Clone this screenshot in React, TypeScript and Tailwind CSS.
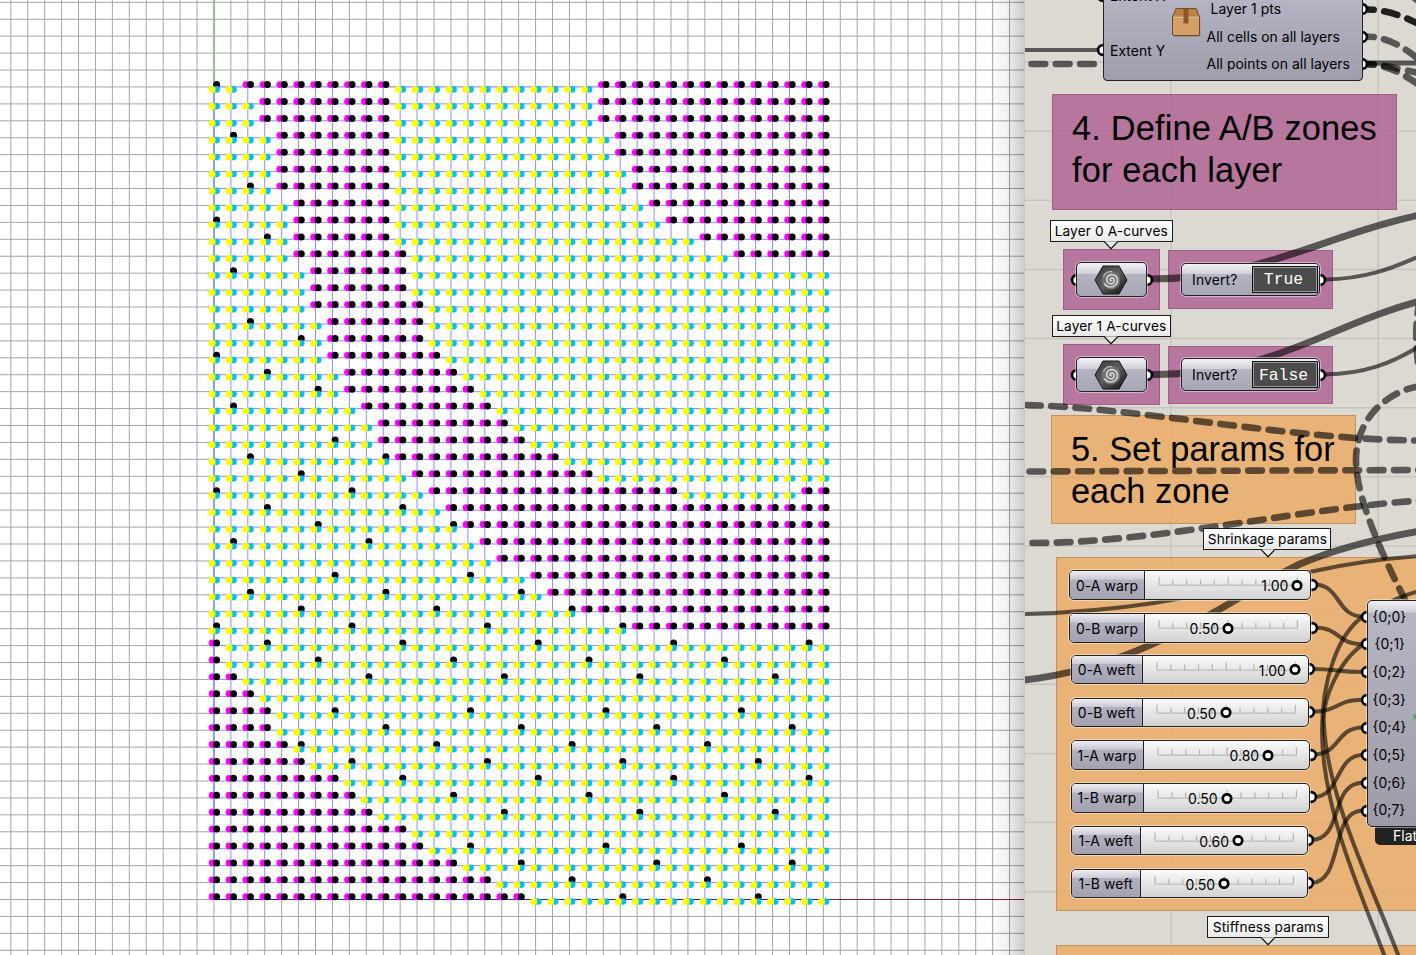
import React from "react";

/* ---------- Viewport: grid, mesh and stitch points ---------- */

const OX = 213.95;
const OY = 899.5;
const PITCH = 16.928;
const COLS = 37;
const ROWS = 49;

type Span = [number, number];

// Columns that belong to zone A, listed for every row from the top.
const zoneA: Span[][] = [
  [[2, 10], [23, 36]],
  [[3, 10], [23, 36]],
  [[3, 10], [23, 36]],
  [[4, 10], [24, 36]],
  [[4, 10], [24, 36]],
  [[4, 10], [25, 36]],
  [[4, 10], [25, 36]],
  [[5, 10], [26, 36]],
  [[5, 10], [27, 36]],
  [[5, 10], [29, 36]],
  [[5, 11], [31, 36]],
  [[6, 11]],
  [[6, 11]],
  [[6, 12]],
  [[7, 12]],
  [[7, 12]],
  [[7, 13]],
  [[8, 14]],
  [[8, 15]],
  [[9, 16]],
  [[10, 17]],
  [[10, 18]],
  [[11, 20]],
  [[12, 22]],
  [[13, 27], [35, 36]],
  [[14, 36]],
  [[15, 36]],
  [[16, 36]],
  [[17, 36]],
  [[19, 36]],
  [[20, 36]],
  [[22, 36]],
  [[25, 36]],
  [[0, 0]],
  [[0, 0]],
  [[0, 1]],
  [[0, 2]],
  [[0, 3]],
  [[0, 3]],
  [[0, 4]],
  [[0, 5]],
  [[0, 7]],
  [[0, 8]],
  [[0, 9]],
  [[0, 11]],
  [[0, 12]],
  [[0, 14]],
  [[0, 16]],
  [[0, 18]],
];

const range = (n: number) => Array.from({ length: n }, (_, i) => i);

function Stitches() {
  const out: React.ReactNode[] = [];
  zoneA.forEach((spans, r) => {
    const y = 84.6 + r * 16.92;
    range(COLS).forEach((c) => {
      const x = 212.1 + c * PITCH;
      const key = r + "-" + c;
      if (spans.some(([a, b]) => c >= a && c <= b)) {
        out.push(
          <g key={key}>
            <circle cx={x} cy={y} r={3.4} fill="#ff00ff" />
            <circle cx={x + 4.5} cy={y} r={3.5} fill="#000" />
          </g>
        );
        return;
      }
      const tied = r % 8 !== 4 && (3 * c) % 8 === r % 8 && (r > 31 || c < spans[0][0]);
      out.push(
        <g key={key}>
          {tied && <circle cx={x + 4.5} cy={y} r={3.5} fill="#000" />}
          <circle cx={x + 4.5} cy={y + 4.8} r={3.3} fill="#00bfff" />
          <circle cx={x} cy={y + 4.8} r={3.5} fill="#ffff00" />
        </g>
      );
    });
  });
  return <>{out}</>;
}

function Viewport() {
  const top = OY - 48 * PITCH;
  const right = OX + 36 * PITCH;
  return (
    <section className="relative h-full w-[1024px] shrink-0 overflow-hidden bg-white">
      <svg width="1024" height="955" viewBox="0 0 1024 955" className="block">
        <g stroke="#a3a4ad" strokeWidth="1">
          {range(62).map((i) => {
            const x = OX + (i - 12) * PITCH;
            return <line key={"v" + i} x1={x} x2={x} y1={0} y2={955} />;
          })}
          {range(58).map((i) => {
            const y = OY + (i - 54) * PITCH;
            return <line key={"h" + i} x1={0} x2={1024} y1={y} y2={y} />;
          })}
        </g>
        <rect x={OX} y={top} width={right - OX} height={OY - top} fill="#fff" />
        <g stroke="#8c8cff" strokeWidth="1">
          {range(COLS).map((i) => (
            <line key={"v" + i} x1={OX + i * PITCH} x2={OX + i * PITCH} y1={top} y2={OY} />
          ))}
          {range(ROWS).map((i) => (
            <line key={"h" + i} x1={OX} x2={right} y1={OY - i * PITCH} y2={OY - i * PITCH} />
          ))}
        </g>
        <line x1={OX} x2={OX} y1={0} y2={top} stroke="#86c486" strokeWidth="1.8" />
        <line x1={OX} x2={OX} y1={top} y2={OY} stroke="#7fa0dc" strokeWidth="1.8" />
        <line x1={OX} x2={right} y1={OY} y2={OY} stroke="#2a1fae" strokeWidth="1" />
        <line x1={right} x2={1024} y1={OY} y2={OY} stroke="#7c2530" strokeWidth="1" />
        <Stitches />
      </svg>
      <div className="absolute inset-y-0 right-0 w-9 bg-gradient-to-r from-black/0 via-black/5 to-black/20" />
    </section>
  );
}

/* ---------- Node canvas ---------- */

const PX = 1024;

const capsule =
  "rounded-[5px] border border-[#222] bg-[linear-gradient(#f3f3f6_0%,#cfcfda_33%,#b4b4c2_34%,#a6a6b4_100%)] shadow-[0_0_0_1px_rgba(255,255,255,0.45)]";

function Place({ x, y, w, h, className = "", children }: {
  x: number; y: number; w?: number; h?: number; className?: string; children?: React.ReactNode;
}) {
  return (
    <div className={"absolute " + className} style={{ left: x - PX, top: y, width: w, height: h }}>
      {children}
    </div>
  );
}

function Group({ x, y, w, h, tone, children }: {
  x: number; y: number; w: number; h: number; tone: "pink" | "orange"; children?: React.ReactNode;
}) {
  const cls =
    tone === "pink"
      ? "border border-[#8f4f7c]/60 bg-[#b36a98]/90"
      : "border border-[#b98c5c]/80 bg-[#eaad6c]/90";
  return <Place x={x} y={y} w={w} h={h} className={cls}>{children}</Place>;
}

function Callout({ x, y, w, tip, text }: { x: number; y: number; w: number; tip: number; text: string }) {
  return (
    <Place x={x} y={y} w={w} h={22}>
      <div className="flex h-full items-center justify-center whitespace-nowrap border-[1.5px] border-[#1c1c1c] bg-gradient-to-b from-white to-[#e9e9e9] pt-px text-[13.7px] tracking-[0.12px]">
        {text}
      </div>
      <svg className="absolute top-[20px]" style={{ left: tip - x - 8 }} width="16" height="10" viewBox="0 0 16 10">
        <path d="M1 1.400 L8 8.800 L15 1.400" fill="#ebebeb" stroke="#1c1c1c" strokeWidth="1.3" />
        <path d="M2 0.600 H14" stroke="#ebebeb" strokeWidth="1.6" />
      </svg>
    </Place>
  );
}

function Grip({ x, y }: { x: number; y: number }) {
  return (
    <svg className="absolute" style={{ left: x - PX - 7, top: y - 7 }} width="14" height="14" viewBox="0 0 14 14">
      <circle cx="7" cy="7" r="4.900" fill="#fff" stroke="#000" strokeWidth="2.600" />
    </svg>
  );
}

function CurveParam({ y }: { y: number }) {
  return (
    <>
      <Grip x={1076.5} y={y} />
      <Grip x={1146.5} y={y} />
      <Place x={1076} y={y - 17.5} w={70.5} h={35} className={"flex items-center justify-center " + capsule}>
        <svg width="34" height="30" viewBox="0 0 34 30">
          <defs>
            <linearGradient id="hex" x1="0" y1="0" x2="1" y2="1">
              <stop offset="0" stopColor="#3c3c3c" />
              <stop offset="0.5" stopColor="#5c5c5c" />
              <stop offset="1" stopColor="#0e0e0e" />
            </linearGradient>
          </defs>
          <path d="M9 1 H25 L33 15 L25 29 H9 L1 15 Z" fill="url(#hex)" stroke="#161616" strokeWidth="1" />
          <circle cx="17" cy="15" r="9.5" fill="#6f6f6f" />
          <path
            d="M17.5 15.5 C15.8 16.3 15.2 13.6 17.2 13 C20 12.3 21.3 15.6 19.6 17.6 C17.4 20 13 18.6 12.7 15 C12.4 10.8 16.6 8.6 20 10 C24.2 11.8 24.6 17.2 21.6 20 C18.4 23 13 22.6 10.6 19"
            fill="none" stroke="#d2d2d2" strokeWidth="1.7" strokeLinecap="round"
          />
          <path d="M9.4 12 C10.6 8.4 14 6.2 18 6.6" fill="none" stroke="#b4b4b4" strokeWidth="1.2" />
        </svg>
      </Place>
    </>
  );
}

function InvertToggle({ y, value }: { y: number; value: string }) {
  return (
    <>
      <Grip x={1319.5} y={y} />
      <Place x={1181} y={y - 16.500} w={138.500} h={33} className={"flex items-center pl-[10px] " + capsule}>
        <span className="w-[59.5px] pt-[2px] text-[13.9px] tracking-[0.15px]">Invert?</span>
        <span className="flex h-[27px] w-[66px] items-center justify-center border-[1.5px] border-[#161616] bg-[#4c4c4c] pr-[2px] pt-[2px] font-['Liberation_Mono',monospace] text-[16.4px] text-white shadow-[inset_0_0_0_1px_#9a9a9a]">
          {value}
        </span>
      </Place>
    </>
  );
}

interface SliderData {
  name: string; value: number; x: number; y: number; split: number; right: number; scale: number;
}

const sliders: SliderData[] = [
  { name: "0-A warp", value: 1, x: 1069, y: 585, split: 1144.5, right: 1311, scale: 1158.4 },
  { name: "0-B warp", value: 0.5, x: 1069, y: 628, split: 1144.5, right: 1311, scale: 1158.4 },
  { name: "0-A weft", value: 1, x: 1070.5, y: 669.5, split: 1142, right: 1308.5, scale: 1155.4 },
  { name: "0-B weft", value: 0.5, x: 1070.5, y: 712.3, split: 1142, right: 1308.5, scale: 1155.4 },
  { name: "1-A warp", value: 0.8, x: 1070.5, y: 755, split: 1143, right: 1310, scale: 1156.7 },
  { name: "1-B warp", value: 0.5, x: 1070.5, y: 797.8, split: 1143, right: 1310, scale: 1156.7 },
  { name: "1-A weft", value: 0.6, x: 1070.5, y: 840.6, split: 1140.5, right: 1307.5, scale: 1154 },
  { name: "1-B weft", value: 0.5, x: 1070.5, y: 883.6, split: 1140.5, right: 1307.5, scale: 1154 },
];

function Slider({ s }: { s: SliderData }) {
  return (
    <>
      <Grip x={s.right + 0.5} y={s.y - 0.5} />
      <Place
        x={s.x} y={s.y - 14.8} w={s.right - s.x} h={29.6}
        className="flex overflow-hidden rounded-[5px] border border-[#222] bg-[linear-gradient(#fafafa,#d2d2d2)] shadow-[0_0_0_1px_rgba(255,255,255,0.45)]"
      >
        <div
          className="flex h-full shrink-0 items-center justify-center whitespace-nowrap border-r-[1.5px] border-[#222] bg-[linear-gradient(#ededf1_0%,#c9c9d5_30%,#b0b0be_31%,#a2a2b0_100%)] pt-[2px] text-[13.9px] tracking-[0.1px]"
          style={{ width: s.split - s.x - 0.5 }}
        >
          {s.name}
        </div>
        <div className="relative h-full flex-1 pl-[10px] pt-[4px]">
          <svg width="150" height="20" viewBox="0 0 150 20">
            <path d="M4 10.3 H142.4" stroke="#c3c3c3" strokeWidth="1.4" />
            {range(11).map((i) => (
              <line key={i} x1={4 + i * 13.84} x2={4 + i * 13.84} y1={i % 5 ? 4.5 : 2.3} y2={10} stroke="#b4b4b4" strokeWidth="1.2" />
            ))}
          </svg>
          <div
            className="absolute top-[4px] flex w-[60px] items-center justify-end gap-[3px] text-[14px] leading-[20px]"
            style={{ left: 14 + 138.4 * s.value - 54 }}
          >
            <span className="pt-px">{s.value.toFixed(2)}</span>
            <svg width="12" height="12" viewBox="0 0 12 12" className="shrink-0">
              <circle cx="6" cy="5.500" r="4.200" fill="#fff" stroke="#000" strokeWidth="2.700" />
            </svg>
          </div>
        </div>
      </Place>
    </>
  );
}

const inputs = [616.5, 644.3, 672, 699.7, 727.5, 755, 782.7, 810.5];

function Wires() {
  return (
    <svg className="absolute inset-0" width="392" height="955" viewBox="1024 0 392 955" fill="none" stroke="#000" strokeOpacity="0.6">
      <g strokeWidth="4">
        <path d="M1024 50 H1100" />
        <path d="M1325 279.5 C1365 279 1390 269 1420 256" />
        <path d="M1325 374.5 C1365 374 1392 363 1420 346" />
        <path d="M1024 614 C1150 611 1220 590 1312 571.5 C1350 563 1380 559 1420 556" />
        <path d="M1392 601 C1400 597 1408 594 1420 591" />
        <path d="M1363 616.5 C1338 634 1322 680 1322 730 C1322 810 1360 890 1388 965" />
        <path d="M1363 644.5 C1340 660 1321 700 1324 725 C1328 800 1370 880 1402 965" />
        {sliders.map((s, i) => {
          const a = s.right + 3;
          const k = i < 2 ? 27 : i > 5 ? 34 : 28;
          return (
            <path key={s.name} d={`M${a} ${s.y - 0.5} C${a + k} ${s.y - 0.5} ${1363 - k} ${inputs[i]} 1363 ${inputs[i]}`} />
          );
        })}
      </g>
      <g strokeWidth="7">
        <path d="M1150 279 C1270 279 1330 229 1450 209" />
        <path d="M1150 374.5 C1285 374.5 1325 322 1440 296" />
        <path d="M1024 680 C1150 666 1235 595 1300 564 C1340 547 1380 538 1420 531" />
        <path d="M1364 63 H1420" strokeWidth="5" />
      </g>
      <g strokeWidth="6.6" strokeLinecap="round" strokeDasharray="13.7 10.6">
        <path d="M1031.5 64 H1104" />
        <path d="M1020 405 C1130 406 1290 440 1420 440.5" strokeDashoffset="-7" />
        <path d="M1029.5 471.5 L1420 470" />
        <path d="M1032.5 543 C1160 543 1310 506 1430 500" />
        <path d="M1420 386 C1385 392 1356 420 1356 460 C1356 500 1385 560 1406 602" />
        <path d="M1420 300 C1415 320 1415 350 1420 375" />
        <path d="M1364 9.5 C1385 9 1405 16 1426 28" strokeOpacity="0.86" strokeDashoffset="4" />
        <path d="M1364 36.5 C1385 36 1405 46 1426 66" strokeDashoffset="4" />
        <path d="M1364 64 C1385 64 1400 70 1426 74" strokeDashoffset="4" />
        <path d="M1364 64 C1385 64 1402 72 1426 90" strokeDashoffset="4" />
        <path d="M1413 -3 L1420 2" />
      </g>
    </svg>
  );
}

function ClusterNode() {
  return (
    <>
      <Grip x={1103} y={-4} />
      <Grip x={1102.5} y={50} />
      <Grip x={1362} y={9} />
      <Grip x={1362} y={36.5} />
      <Grip x={1362} y={64} />
      <Place
        x={1103} y={-20} w={259.5} h={101}
        className="flex items-start whitespace-nowrap rounded-[4px] border border-[#222] bg-gradient-to-b from-[#b9b9c7] to-[#9d9dab] text-[13.9px] leading-[20px] tracking-[0.05px]"
      >
        <div className="flex w-[66px] flex-col gap-[34.7px] pl-[6px] pt-[5px]">
          <span>Extent X</span>
          <span>Extent Y</span>
        </div>
        <svg width="32" height="32" viewBox="0 0 32 32" className="mt-[25px] shrink-0">
          <path d="M2.5 12 L5.5 2.5 H26.5 L29.5 12 V28 Q29.5 29.5 28 29.5 H4 Q2.5 29.5 2.5 28 Z" fill="#5a4126" opacity="0.5" transform="translate(0.7 1)" />
          <path d="M2.5 11 L6 2.5 H26 L29.5 11 Z" fill="#b98347" stroke="#7a4d20" strokeWidth="1" />
          <path d="M2.5 10.5 H29.5 V28 Q29.5 29.5 28 29.5 H4 Q2.5 29.5 2.5 28 Z" fill="#d3a067" stroke="#6e4a24" strokeWidth="1" />
          <path d="M3.2 11 H29" stroke="#f1cf9d" strokeWidth="1.2" />
          <path d="M13.5 3 H18.5 V18 L17.3 17 L16 18 L14.7 17 L13.5 18 Z" fill="#8e5727" />
        </svg>
        <div className="flex flex-col pl-[4.5px] pt-[15.3px] leading-[27.4px]">
          <span className="pl-[4px]">Layer 1 pts</span>
          <span>All cells on all layers</span>
          <span>All points on all layers</span>
        </div>
      </Place>
    </>
  );
}

function MergeNode() {
  return (
    <>
      {inputs.map((y) => <Grip key={y} x={1367} y={y} />)}
      <Place x={1375} y={824} w={60} h={21} className="rounded-[5px] bg-[#222] pl-[18px] pt-[3px] text-[14px] leading-[18px] text-white">Flatten</Place>
      <Place
        x={1366.5} y={599.5} w={80} h={227}
        className="flex flex-col rounded-[5px] border border-[#222] bg-[linear-gradient(#f0f0f3_0px,#cfcfd9_11px,#b6b6c3_12px,#9c9ca9_100%)] pl-[5px] pt-[3px] text-[13.9px] leading-[27.7px] shadow-[0_0_0_1px_rgba(255,255,255,0.45)]"
      >
        {inputs.map((y, i) => (
          <span key={y} className={i === 1 ? "pl-[2px]" : ""}>{`{0;${i}}`}</span>
        ))}
      </Place>
      <svg className="absolute right-0 top-[711px]" width="4" height="12" viewBox="0 0 5 12">
        <path d="M5 0 L4 4 L0 3 L3 6 L1 10 L5 8 Z" fill="#4f9d4f" />
      </svg>
    </>
  );
}

function NodeCanvas() {
  return (
    <section className="relative h-full flex-1 overflow-hidden bg-[#dcd9d3]">
      <svg className="absolute inset-0" width="392" height="955" viewBox="1024 0 392 955" stroke="#c7c4be" strokeWidth="1.5">
        {range(2).map((i) => <line key={i} x1={1171 + i * 207.2} x2={1171 + i * 207.2} y1={0} y2={955} />)}
        {range(14).map((i) => <line key={i} x1={1024} x2={1416} y1={-7.2 + i * 69.15} y2={-7.2 + i * 69.15} />)}
      </svg>

      <Group x={1052} y={94} w={345} h={116} tone="pink">
        <h2 className="whitespace-nowrap pl-[19px] pt-[12px] font-['Liberation_Sans',sans-serif] text-[34.4px] leading-[42px] tracking-[0.15px]">
          4. Define A/B zones<br />for each layer
        </h2>
      </Group>
      <Group x={1062.5} y={248.5} w={97.5} h={61} tone="pink" />
      <Group x={1168} y={250} w={164.5} h={58.5} tone="pink" />
      <Group x={1062.5} y={344} w={97.5} h={61} tone="pink" />
      <Group x={1168} y={345.5} w={164.5} h={58.5} tone="pink" />
      <Group x={1051.4} y={415} w={305} h={109} tone="orange">
        <h2 className="whitespace-nowrap pl-[18.5px] pt-[12px] font-['Liberation_Sans',sans-serif] text-[34.4px] leading-[42px]">
          5. Set params for<br />each zone
        </h2>
      </Group>
      <Group x={1056} y={557} w={400} h={354} tone="orange" />
      <Group x={1056} y={945} w={400} h={40} tone="orange" />

      <Wires />
      <ClusterNode />
      <Callout x={1050} y={219.5} w={122.5} tip={1111} text="Layer 0 A-curves" />
      <CurveParam y={279.5} />
      <InvertToggle y={279.5} value="True" />
      <Callout x={1051.5} y={315} w={119.5} tip={1111} text="Layer 1 A-curves" />
      <CurveParam y={374.8} />
      <InvertToggle y={374.8} value="False" />
      <Callout x={1203.4} y={527.5} w={128} tip={1268} text="Shrinkage params" />
      {sliders.map((s) => <Slider key={s.name} s={s} />)}
      <MergeNode />
      <Callout x={1207.4} y={916} w={121.5} tip={1268} text="Stiffness params" />
      <div className="absolute inset-y-0 left-0 w-px bg-[#c9c7c3]" />
    </section>
  );
}

export default function App() {
  return (
    <main className="flex h-[955px] w-[1416px] overflow-hidden font-['Inter',sans-serif] text-black">
      <Viewport />
      <NodeCanvas />
    </main>
  );
}
